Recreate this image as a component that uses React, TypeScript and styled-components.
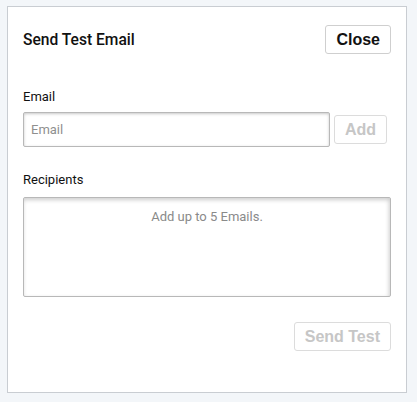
import React from "react";
import styled, { createGlobalStyle } from "styled-components";

const GlobalStyle = createGlobalStyle`
  html, body {
    margin: 0;
    padding: 0;
    background: #f3f6f9;
  }
  body {
    font-family: Roboto, "Liberation Sans", Arial, sans-serif;
  }
  * { box-sizing: border-box; }
`;

const Panel = styled.div`
  width: 400px;
  height: 387px;
  margin: 6px 0 0 7px;
  background: #ffffff;
  border: 1px solid #c9cdd2;
  padding: 18px 15px 40px 15px;
  display: flex;
  flex-direction: column;
`;

const Header = styled.div`
  display: flex;
  align-items: center;
  justify-content: space-between;
  height: 29px;
  margin-bottom: 35px;
`;

const Title = styled.h2`
  margin: 0;
  font-family: Roboto, sans-serif;
  font-size: 15.6px;
  font-weight: 500;
  color: #111111;
`;

const Button = styled.button<{ $disabled?: boolean }>`
  height: 29px;
  padding: 0 10px;
  background: #ffffff;
  border: 1px solid ${(p) => (p.$disabled ? "#dcdcdc" : "#cfcfcf")};
  border-radius: 3px;
  font-family: "Liberation Sans", Arial, sans-serif;
  font-size: 16px;
  font-weight: 700;
  color: ${(p) => (p.$disabled ? "#c6c6c6" : "#111111")};
  cursor: ${(p) => (p.$disabled ? "default" : "pointer")};
  flex: none;
`;

const Label = styled.label<{ $gap: number }>`
  display: block;
  font-family: Roboto, sans-serif;
  font-size: 13px;
  line-height: 16px;
  color: #111111;
  margin-bottom: ${(p) => p.$gap}px;
`;

const InputRow = styled.div`
  display: flex;
  align-items: center;
  gap: 4px;
  padding-right: 4px;
  margin-bottom: 25px;
`;

const TextInput = styled.input`
  flex: 1;
  min-width: 0;
  height: 35px;
  padding: 0 7px;
  border: 1px solid #b8b8b8;
  border-radius: 2px;
  box-shadow: inset 0 1px 3px rgba(0, 0, 0, 0.22);
  font-family: Roboto, sans-serif;
  font-size: 13px;
  color: #333;
  outline: none;
  &::placeholder {
    color: #8f8f8f;
  }
`;

const RecipientsBox = styled.div`
  height: 100px;
  border: 1px solid #b8b8b8;
  border-radius: 2px;
  box-shadow: inset -1px 2px 4px rgba(0, 0, 0, 0.2);
  padding-top: 11px;
  text-align: center;
  font-family: Roboto, sans-serif;
  font-size: 13px;
  line-height: 16px;
  color: #8a8a8a;
  margin-bottom: 25px;
`;

const Footer = styled.div`
  display: flex;
  justify-content: flex-end;
`;

export default function App() {
  return (
    <>
      <GlobalStyle />
      <Panel>
        <Header>
          <Title>Send Test Email</Title>
          <Button>Close</Button>
        </Header>
        <Label $gap={7}>Email</Label>
        <InputRow>
          <TextInput placeholder="Email" />
          <Button $disabled disabled>
            Add
          </Button>
        </InputRow>
        <Label $gap={9}>Recipients</Label>
        <RecipientsBox>Add up to 5 Emails.</RecipientsBox>
        <Footer>
          <Button $disabled disabled>
            Send Test
          </Button>
        </Footer>
      </Panel>
    </>
  );
}
